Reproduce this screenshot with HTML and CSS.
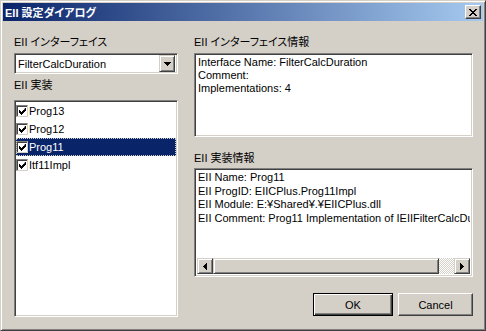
FILE: index.html
```html
<!DOCTYPE html>
<html lang="ja">
<head>
    <meta charset="UTF-8">
    <title>EII 設定ダイアログ</title>
    <link rel="stylesheet" href="styles.css">
</head>
<body>
<div class="dialog">
    <div class="titlebar">
        <span class="title">EII <span class="jp">設定ダイアログ</span></span>
        <span class="close-btn">
            <svg width="8" height="7" viewBox="0 0 8 7"><path d="M0 0h2v1h1v1h2v-1h1v-1h2v1h-1v1h-1v1h-1v1h1v1h1v1h1v1h-2v-1h-1v-1h-2v1h-1v1h-2v-1h1v-1h1v-1h1v-1h-1v-1h-1v-1h-1z"/></svg>
        </span>
    </div>

    <div class="content">
        <div class="col-left">
            <div class="label">EII <span class="jp">インターフェイス</span></div>
            <div class="combo">
                <span class="combo-text">FilterCalcDuration</span>
                <span class="combo-btn">
                    <svg width="7" height="4" viewBox="0 0 7 4"><path d="M0 0h7v1h-1v1h-1v1h-1v1h-1v-1h-1v-1h-1v-1h-1z"/></svg>
                </span>
            </div>
            <div class="label label-impl">EII <span class="jp">実装</span></div>
            <ul class="listbox">
                <li class="item"><span class="check"><svg width="7" height="7" viewBox="0 0 7 7"><path d="M6 0h1v3h-1v1h-1v1h-1v1h-1v1h-1v-1h-1v-1h-1v-3h1v1h1v1h1v-1h1v-1h1z"/></svg></span>Prog13</li>
                <li class="item"><span class="check"><svg width="7" height="7" viewBox="0 0 7 7"><path d="M6 0h1v3h-1v1h-1v1h-1v1h-1v1h-1v-1h-1v-1h-1v-3h1v1h1v1h1v-1h1v-1h1z"/></svg></span>Prog12</li>
                <li class="item selected"><span class="check"><svg width="7" height="7" viewBox="0 0 7 7"><path d="M6 0h1v3h-1v1h-1v1h-1v1h-1v1h-1v-1h-1v-1h-1v-3h1v1h1v1h1v-1h1v-1h1z"/></svg></span>Prog11</li>
                <li class="item"><span class="check"><svg width="7" height="7" viewBox="0 0 7 7"><path d="M6 0h1v3h-1v1h-1v1h-1v1h-1v1h-1v-1h-1v-1h-1v-3h1v1h1v1h1v-1h1v-1h1z"/></svg></span>Itf11Impl</li>
            </ul>
        </div>

        <div class="col-right">
            <div class="label">EII <span class="jp">インターフェイス情報</span></div>
            <div class="infobox info-iface">Interface Name: FilterCalcDuration
Comment:
Implementations: 4</div>
            <div class="label label-info">EII <span class="jp">実装情報</span></div>
            <div class="infobox info-impl">
                <div class="info-text">EII Name: Prog11
EII ProgID: EIICPlus.Prog11Impl
EII Module: E:¥Shared¥.¥EIICPlus.dll
EII Comment: Prog11 Implementation of IEIIFilterCalcDuration</div>
                <div class="hscroll">
                    <span class="sb-btn">
                        <svg width="4" height="7" viewBox="0 0 4 7"><path d="M3 0h1v7h-1v-1h-1v-1h-1v-1h-1v-1h1v-1h1v-1h1z"/></svg>
                    </span>
                    <span class="sb-thumb"></span>
                    <span class="sb-track"></span>
                    <span class="sb-btn">
                        <svg width="4" height="7" viewBox="0 0 4 7"><path d="M0 0h1v1h1v1h1v1h1v1h-1v1h-1v1h-1v1h-1z"/></svg>
                    </span>
                </div>
            </div>
            <div class="buttons">
                <button class="btn btn-default">OK</button>
                <button class="btn">Cancel</button>
            </div>
        </div>
    </div>
</div>
</body>
</html>
```

FILE: styles.css
```css
* {
    box-sizing: border-box;
}

body {
    margin: 0;
    background: #d4d0c8;
    font-family: "Liberation Sans", "Noto Sans CJK JP", sans-serif;
    font-size: 11px;
    color: #000;
}

.jp {
    font-family: "Noto Sans CJK JP", sans-serif;
    font-feature-settings: "palt" 1;
}

/* window frame */
.dialog {
    width: 486px;
    height: 331px;
    background: #d4d0c8;
    border: 1px solid;
    border-color: #d4d0c8 #404040 #404040 #d4d0c8;
    box-shadow: inset 1px 1px #fff, inset -1px -1px #808080;
    padding: 2px;
    display: flex;
    flex-direction: column;
}

.titlebar {
    height: 18px;
    flex: none;
    display: flex;
    align-items: center;
    justify-content: space-between;
    padding: 0 2px 0 2px;
    background: linear-gradient(to right, #0a246a, #a6caf0);
    color: #fff;
    font-weight: bold;
}

.title {
    line-height: 18px;
}

.close-btn {
    width: 16px;
    height: 14px;
    display: flex;
    align-items: center;
    justify-content: center;
    background: #d4d0c8;
    border: 1px solid;
    border-color: #fff #404040 #404040 #fff;
    box-shadow: inset -1px -1px #808080;
}

.content {
    flex: 1;
    display: flex;
    gap: 16px;
    padding: 13px 10px 0 11px;
}

.col-left {
    width: 164px;
    display: flex;
    flex-direction: column;
}

.col-right {
    width: 279px;
    display: flex;
    flex-direction: column;
}

.label {
    height: 14px;
    line-height: 14px;
    white-space: nowrap;
}

.label-impl {
    margin-top: 3px;
}

.label-info {
    margin-top: 13px;
}

/* sunken fields */
.combo,
.listbox,
.infobox {
    background: #fff;
    border: 1px solid;
    border-color: #808080 #fff #fff #808080;
    box-shadow: inset 1px 1px #404040, inset -1px -1px #d4d0c8;
}

.combo {
    margin-top: 5px;
    height: 21px;
    display: flex;
    align-items: center;
    justify-content: space-between;
    padding: 2px 2px 2px 3px;
}

.combo-btn {
    width: 16px;
    height: 17px;
    display: flex;
    align-items: center;
    justify-content: center;
    background: #d4d0c8;
    border: 1px solid;
    border-color: #d4d0c8 #404040 #404040 #d4d0c8;
    box-shadow: inset 1px 1px #fff, inset -1px -1px #808080;
}

.listbox {
    list-style: none;
    margin: 9px 0 0 0;
    height: 217px;
    padding: 1px 1px;
}

.item {
    height: 18px;
    display: flex;
    align-items: center;
    white-space: nowrap;
}

.item.selected {
    background: #0a246a;
    color: #fff;
    outline: 1px dotted #d4d0c8;
    outline-offset: -1px;
}

.check {
    width: 12px;
    height: 12px;
    margin: 0 1px 0 0;
    display: flex;
    align-items: center;
    justify-content: center;
    background: #fff;
    border: 1px solid;
    border-color: #808080 #d4d0c8 #d4d0c8 #808080;
    box-shadow: inset 1px 1px #404040;
}

.check svg {
    margin: 1px 0 0 1px;
}

.infobox {
    margin-top: 5px;
    white-space: pre;
    overflow: hidden;
}

.info-iface {
    height: 84px;
    padding: 2px 3px;
    line-height: 13px;
}

.info-impl {
    margin-top: 4px;
    height: 109px;
    padding: 2px;
    display: flex;
    flex-direction: column;
}

.info-text {
    flex: 1;
    padding: 0 1px;
    line-height: 13.5px;
    overflow: hidden;
}

.hscroll {
    height: 16px;
    flex: none;
    display: flex;
}

.sb-btn,
.sb-thumb {
    background: #d4d0c8;
    border: 1px solid;
    border-color: #d4d0c8 #404040 #404040 #d4d0c8;
    box-shadow: inset 1px 1px #fff, inset -1px -1px #808080;
}

.sb-btn {
    width: 16px;
    display: flex;
    align-items: center;
    justify-content: center;
}

.sb-thumb {
    width: 226px;
}

.sb-track {
    flex: 1;
    background: repeating-conic-gradient(#fff 0 25%, #d4d0c8 0 50%) 0 0 / 2px 2px;
}

.buttons {
    margin-top: 16px;
    display: flex;
    justify-content: flex-end;
    gap: 5px;
}

.btn {
    height: 23px;
    width: 75px;
    padding: 0;
    font-family: "Liberation Sans", sans-serif;
    font-size: 11px;
    color: #000;
    background: #d4d0c8;
    border: 1px solid;
    border-color: #fff #404040 #404040 #fff;
    box-shadow: inset -1px -1px #808080;
}

.btn-default {
    width: 80px;
    border-color: #000;
    box-shadow: inset 1px 1px #fff, inset -1px -1px #404040, inset -2px -2px #808080;
}
```
